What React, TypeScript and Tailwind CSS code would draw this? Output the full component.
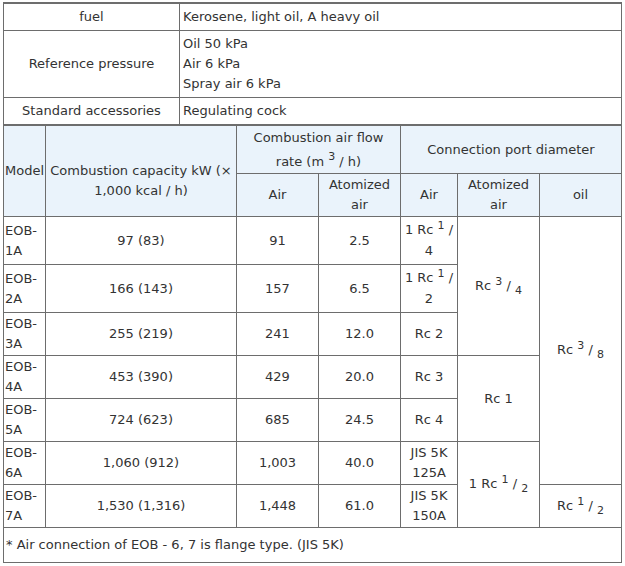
const line = 'border-[#6d6d6d]';
const head = 'bg-[#eaf3fb]';

function Sup({ children }: { children: React.ReactNode }) {
  return <sup className="relative top-0 align-super text-[11px] leading-none">{children}</sup>;
}

function Sub({ children }: { children: React.ReactNode }) {
  return <sub className="relative bottom-0 align-sub text-[11px] leading-none">{children}</sub>;
}

function Cell({
  children,
  className = '',
  left = false,
}: {
  children?: React.ReactNode;
  className?: string;
  left?: boolean;
}) {
  return (
    <div
      className={`flex items-center border-r border-b ${line} ${
        left ? 'justify-start text-left' : 'justify-center text-center'
      } ${className}`}
    >
      <div>{children}</div>
    </div>
  );
}

const rows = [
  { model: 'EOB-1A', cap: '97 (83)', air: '91', atom: '2.5', port: <>1 Rc <Sup>1</Sup> / 4</> },
  { model: 'EOB-2A', cap: '166 (143)', air: '157', atom: '6.5', port: <>1 Rc <Sup>1</Sup> / 2</> },
  { model: 'EOB-3A', cap: '255 (219)', air: '241', atom: '12.0', port: 'Rc 2' },
  { model: 'EOB-4A', cap: '453 (390)', air: '429', atom: '20.0', port: 'Rc 3' },
  { model: 'EOB-5A', cap: '724 (623)', air: '685', atom: '24.5', port: 'Rc 4' },
  { model: 'EOB-6A', cap: '1,060 (912)', air: '1,003', atom: '40.0', port: <>JIS 5K 125A</> },
  { model: 'EOB-7A', cap: '1,530 (1,316)', air: '1,448', atom: '61.0', port: <>JIS 5K 150A</> },
];

// cells that span several model rows, keyed by row index
const atomizedPort: Record<number, { span: string; body: React.ReactNode }> = {
  0: { span: 'row-span-3', body: <>Rc <Sup>3</Sup> / <Sub>4</Sub></> },
  3: { span: 'row-span-2', body: 'Rc 1' },
  5: { span: 'row-span-2', body: <>1 Rc <Sup>1</Sup> / <Sub>2</Sub></> },
};

const oilPort: Record<number, { span: string; body: React.ReactNode }> = {
  0: { span: 'row-span-6', body: <>Rc <Sup>3</Sup> / <Sub>8</Sub></> },
  6: { span: '', body: <>Rc <Sup>1</Sup> / <Sub>2</Sub></> },
};

export default function App() {
  return (
    <div className="min-h-screen bg-white pt-[2px] pl-[3px] font-['DejaVu_Sans',sans-serif] text-[13px] leading-5 text-[#333]">
      {/* spec table */}
      <div className={`grid w-[619px] grid-cols-[176px_442px] grid-rows-[27px_67px_27px] border-t-2 border-l ${line}`}>
        <Cell>fuel</Cell>
        <Cell left className="pl-[3px]">Kerosene, light oil, A heavy oil</Cell>
        <Cell>Reference pressure</Cell>
        <Cell left className="pl-[3px]">
          Oil 50 kPa
          <br />
          Air 6 kPa
          <br />
          Spray air 6 kPa
        </Cell>
        <Cell>Standard accessories</Cell>
        <Cell left className="pl-[3px]">Regulating cock</Cell>
      </div>

      {/* model table */}
      <div
        className={`grid w-[619px] grid-cols-[42px_191px_82px_82px_57px_82px_82px] grid-rows-[48px_43px_48px_48px_43px_43px_43px_43px_43px_35px] border-t border-l ${line}`}
      >
        <Cell left className={`row-span-2 pl-[1px] ${head}`}>Model</Cell>
        <Cell className={`row-span-2 px-[2px] pt-[19px] ${head}`}>Combustion capacity kW (× 1,000 kcal / h)</Cell>
        <Cell className={`col-span-2 px-[2px] leading-[24px] ${head}`}>
          Combustion air flow rate (m <Sup>3</Sup> / h)
        </Cell>
        <Cell className={`col-span-3 ${head}`}>Connection port diameter</Cell>
        <Cell className={head}>Air</Cell>
        <Cell className={`px-[2px] ${head}`}>Atomized air</Cell>
        <Cell className={head}>Air</Cell>
        <Cell className={`px-[2px] ${head}`}>Atomized air</Cell>
        <Cell className={head}>oil</Cell>

        {rows.map((r, i) => (
          <div key={r.model} className="contents">
            <Cell left className="pl-[1px]">{r.model}</Cell>
            <Cell>{r.cap}</Cell>
            <Cell>{r.air}</Cell>
            <Cell>{r.atom}</Cell>
            <Cell className="px-[2px]">{r.port}</Cell>
            {atomizedPort[i] && <Cell className={atomizedPort[i].span}>{atomizedPort[i].body}</Cell>}
            {oilPort[i] && <Cell className={oilPort[i].span}>{oilPort[i].body}</Cell>}
          </div>
        ))}

        <Cell left className="col-span-7 pl-[2px]">* Air connection of EOB - 6, 7 is flange type. (JIS 5K)</Cell>
      </div>
    </div>
  );
}
